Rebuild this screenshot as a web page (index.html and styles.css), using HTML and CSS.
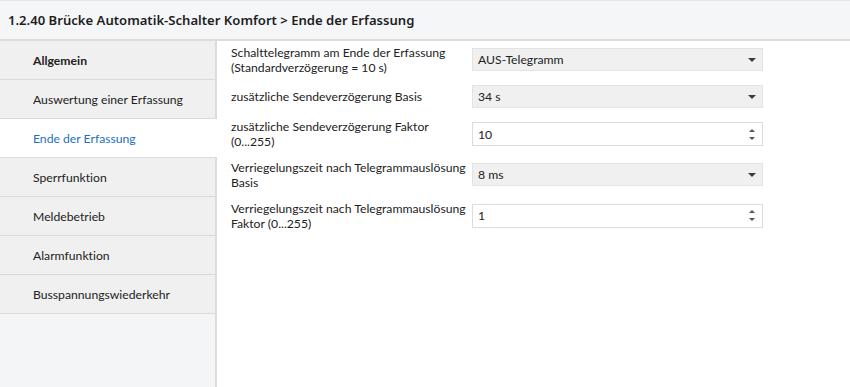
FILE: index.html
```html
<!DOCTYPE html>
<html lang="de">
<head>
<meta charset="utf-8">
<link rel="stylesheet" href="styles.css">
</head>
<body>
<div class="header">1.2.40 Brücke Automatik-Schalter Komfort &gt; Ende der Erfassung</div>
<div class="main">
  <nav class="sidebar">
    <div class="item bold">Allgemein</div>
    <div class="item">Auswertung einer Erfassung</div>
    <div class="item active">Ende der Erfassung</div>
    <div class="item">Sperrfunktion</div>
    <div class="item">Meldebetrieb</div>
    <div class="item">Alarmfunktion</div>
    <div class="item">Busspannungswiederkehr</div>
  </nav>
  <section class="content">
    <div class="label">Schalttelegramm am Ende der Erfassung<br>(Standardverzögerung = 10 s)</div>
    <div class="select"><span>AUS-Telegramm</span><i class="caret"></i></div>
    <div class="label">zusätzliche Sendeverzögerung Basis</div>
    <div class="select"><span>34 s</span><i class="caret"></i></div>
    <div class="label">zusätzliche Sendeverzögerung Faktor<br>(0...255)</div>
    <div class="input"><span>10</span><span class="spin"><i class="up"></i><i class="down"></i></span></div>
    <div class="label">Verriegelungszeit nach Telegrammauslösung<br>Basis</div>
    <div class="select"><span>8 ms</span><i class="caret"></i></div>
    <div class="label">Verriegelungszeit nach Telegrammauslösung<br>Faktor (0...255)</div>
    <div class="input"><span>1</span><span class="spin"><i class="up"></i><i class="down"></i></span></div>
  </section>
</div>
</body>
</html>
```

FILE: styles.css
```css
html, body {
  margin: 0;
  padding: 0;
  height: 100%;
  background: #ffffff;
  font-family: "Lato", "Noto Sans", sans-serif;
  font-size: 12.2px;
  font-variant-ligatures: none;
  color: #222;
  overflow: hidden;
}
.header {
  box-sizing: border-box;
  height: 40px;
  border-top: 1px solid #e4e4e4;
  border-bottom: 1px solid #dcdcdc;
  background: #f5f6f8;
  padding-left: 8px;
  display: flex;
  align-items: center;
  font-family: "Noto Sans", sans-serif;
  font-size: 13.1px;
  font-weight: 600;
  color: #1e1e1e;
}
.main {
  display: flex;
  height: calc(100% - 41px);
  border-top: 1px solid #dcdcdc;
}
.sidebar {
  width: 215px;
  flex: none;
  background: #f4f5f7;
  border-right: 2px solid #dcdcdc;
  display: flex;
  flex-direction: column;
}
.item {
  height: 38px;
  flex: none;
  border-bottom: 1px solid #dadada;
  background: #f0f0f0;
  padding-left: 33px;
  display: flex;
  align-items: center;
  color: #222;
  white-space: nowrap;
}
.item.bold {
  font-weight: 700;
}
.item.active {
  background: #ffffff;
  color: #1f6fbf;
  margin-right: -2px;
}
.content {
  flex: 1;
  padding: 3.5px 0 0 14px;
  display: grid;
  grid-template-columns: 241px 291px;
  grid-auto-rows: min-content;
  row-gap: 10.75px;
  align-items: center;
  align-content: start;
}
.label {
  line-height: 15px;
  color: #222;
  white-space: nowrap;
}
.select, .input {
  box-sizing: border-box;
  display: flex;
  align-items: center;
  justify-content: space-between;
  padding: 0 6px 0 5px;
  color: #222;
}
.select {
  height: 23px;
  background: #f0f0f0;
  border: 1px solid #e3e3e3;
}
.input {
  height: 24px;
  background: #fff;
  border: 1px solid #dcdcdc;
  padding-right: 7px;
}
.caret {
  width: 0;
  height: 0;
  border-left: 4px solid transparent;
  border-right: 4px solid transparent;
  border-top: 4px solid #3c3c3c;
}
.spin {
  display: flex;
  flex-direction: column;
  gap: 5px;
}
.spin .up {
  width: 0;
  height: 0;
  border-left: 3px solid transparent;
  border-right: 3px solid transparent;
  border-bottom: 3px solid #555;
}
.spin .down {
  width: 0;
  height: 0;
  border-left: 3px solid transparent;
  border-right: 3px solid transparent;
  border-top: 3px solid #555;
}
```
